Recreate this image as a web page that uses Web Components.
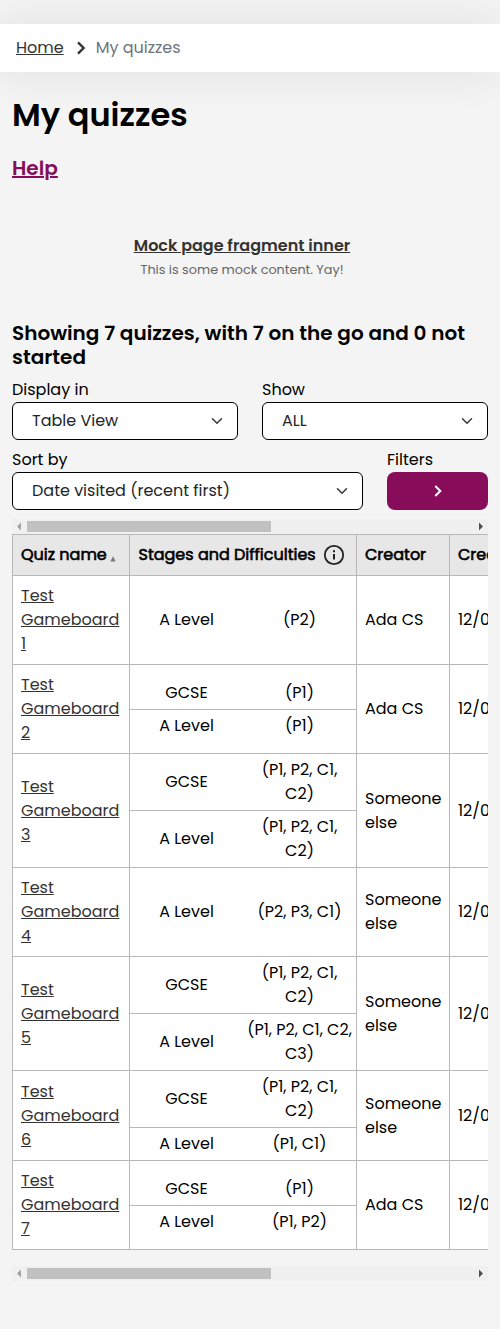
<!DOCTYPE html>
<html lang="en">
<head>
<meta charset="utf-8">
<title>My quizzes</title>
<style>
body{margin:0;background:#f4f4f4;color:#000;font:16px/24px Poppins,Inter,sans-serif}
</style>
</head>
<body>
<quiz-page></quiz-page>
<script>
const t = s => `<text-line>${s}</text-line>`;

// One unbroken line of text; "u" underlines it.
customElements.define('text-line', class extends HTMLElement {
  connectedCallback() {
    this.attachShadow({mode: 'open'}).innerHTML = `<style>
      :host{display:block;white-space:nowrap;width:max-content}
      :host([u]){text-decoration:underline}
    </style><slot></slot>`;
  }
});

customElements.define('crumb-bar', class extends HTMLElement {
  connectedCallback() {
    this.attachShadow({mode: 'open'}).innerHTML = `<style>
      :host{display:flex;align-items:center;height:48px;padding-left:16px;background:#fff;box-shadow:0 0 48px rgba(0,0,0,.09)}
      .home{color:#333}.now{color:#6c757d}
      svg{display:block;margin:0 10px 0 12px}
    </style><text-line class="home" u>Home</text-line>
    <svg width="10" height="14" viewBox="0 0 10 14" fill="none" stroke="#333" stroke-width="2.4"><path d="M2 1.4 7.6 7 2 12.6"/></svg>
    <text-line class="now">My quizzes</text-line>`;
  }
});

customElements.define('select-box', class extends HTMLElement {
  connectedCallback() {
    this.attachShadow({mode: 'open'}).innerHTML = `<style>
      :host{display:block}
      .box{box-sizing:border-box;display:flex;align-items:center;justify-content:space-between;height:38px;border:1px solid #000;border-radius:6px;background:#fff;padding:0 14px 0 19px;color:#212529}
    </style><slot name="label"></slot><div class="box"><slot></slot>
    <svg width="12" height="12" viewBox="0 0 16 16" fill="none" stroke="#343a40" stroke-width="2" stroke-linecap="round" stroke-linejoin="round"><path d="m2 5 6 6 6-6"/></svg></div>`;
  }
});

customElements.define('filter-button', class extends HTMLElement {
  connectedCallback() {
    this.attachShadow({mode: 'open'}).innerHTML = `<style>
      :host{display:block}
      button{display:flex;align-items:center;justify-content:center;width:100%;height:38px;margin:0;padding:0;border:0;border-radius:8px;background:#870d5a}
    </style><slot></slot><button aria-label="Filters"><svg width="8" height="12" viewBox="0 0 8 12" fill="none" stroke="#fff" stroke-width="2"><path d="M1.3 1 6.3 6l-5 5"/></svg></button>`;
  }
});

customElements.define('scroll-strip', class extends HTMLElement {
  connectedCallback() {
    this.attachShadow({mode: 'open'}).innerHTML = `<style>
      :host{display:grid;grid-template-columns:15px 244px 1fr 15px;align-items:center;height:15px;background:#f0f0f0}
      i{height:11px;background:#c1c1c1}
      svg{display:block}
    </style><svg width="15" height="15"><path d="M9 3.5v8l-4-4z" fill="#a3a3a3"/></svg><i></i><b></b>
    <svg width="15" height="15"><path d="M6 3.5v8l4-4z" fill="#505050"/></svg>`;
  }
});

customElements.define('stage-list', class extends HTMLElement {
  connectedCallback() {
    this.attachShadow({mode: 'open'}).innerHTML = `<style>
      :host{display:block;width:100%}
      .row{display:grid;grid-template-columns:1fr 1fr;align-items:center;padding:4px 0}
      .row+.row{border-top:1px solid #b8b8b8}
      .row>*{display:flex;flex-direction:column;align-items:center}
    </style>` + this.stages.map(([s, ...l]) => `<div class="row"><div>${t(s)}</div><div>${l.map(t).join('')}</div></div>`).join('');
  }
});

customElements.define('quiz-row', class extends HTMLElement {
  connectedCallback() {
    this.attachShadow({mode: 'open'}).innerHTML = `<style>
      :host{display:grid;grid-template-columns:117px 227px 93px 160px;background:#fff;border-bottom:1px solid #b8b8b8}
      .c{box-sizing:border-box;border-right:1px solid #b8b8b8;display:flex;flex-direction:column;justify-content:center;padding:0 8px}
      .name{padding:8px;color:#333}.stages{padding:0}
    </style><div class="c name"><text-line u>Test</text-line><text-line u>Gameboard</text-line><text-line u>${this.n}</text-line></div>
    <div class="c stages"></div>
    <div class="c">${this.ada ? t('Ada CS') : t('Someone') + t('else')}</div>
    <div class="c">${t('12/0')}</div>`;
    const s = document.createElement('stage-list');
    s.stages = this.stages;
    this.shadowRoot.querySelector('.stages').append(s);
  }
});

customElements.define('quiz-table', class extends HTMLElement {
  connectedCallback() {
    this.attachShadow({mode: 'open'}).innerHTML = `<style>
      :host{display:block;overflow:hidden;border:solid #b8b8b8;border-width:1px 0 0 1px}
      .head{display:grid;grid-template-columns:117px 227px 93px 160px;height:40px;background:#e7e7e7;border-bottom:1px solid #b8b8b8;width:max-content}
      .head text-line{-webkit-text-stroke:.6px #000}
      .head>div{box-sizing:border-box;border-right:1px solid #b8b8b8;display:flex;align-items:center;padding:0 8px}
      quiz-row{width:597px}
    </style><div class="head"><div>${t('Quiz name')}<svg width="6" height="6" style="margin:8px 0 0 3px"><path d="M3 .3 5.6 5.5H.4z" fill="#777"/></svg></div>
    <div style="padding-left:8.5px">${t('Stages and Difficulties')}<svg width="22" height="22" viewBox="0 0 22 22" style="margin-left:7.3px"><circle cx="11" cy="11" r="9.2" fill="none" stroke="#222" stroke-width="1.8"/><path d="M11 10v5.5M11 6.3v2" stroke="#222" stroke-width="2"/></svg></div>
    <div>${t('Creator')}</div><div>${t('Created')}</div></div>`;
    const long = ['(P1, P2, C1,', 'C2)'];
    [
      [1, [['A Level', '(P2)']]],
      [1, [['GCSE', '(P1)'], ['A Level', '(P1)']]],
      [0, [['GCSE', ...long], ['A Level', ...long]]],
      [0, [['A Level', '(P2, P3, C1)']]],
      [0, [['GCSE', ...long], ['A Level', '(P1, P2, C1, C2,', 'C3)']]],
      [0, [['GCSE', ...long], ['A Level', '(P1, C1)']]],
      [1, [['GCSE', '(P1)'], ['A Level', '(P1, P2)']]]
    ].forEach(([ada, stages], i) => {
      const r = document.createElement('quiz-row');
      Object.assign(r, {n: i + 1, ada, stages});
      this.shadowRoot.append(r);
    });
  }
});

customElements.define('quiz-page', class extends HTMLElement {
  connectedCallback() {
    this.attachShadow({mode: 'open'}).innerHTML = `<style>
      :host{display:block;padding-top:24px;height:1305px;overflow:hidden}
      main{padding:0 12px}
      h1{margin:0;padding-top:23px;font:600 32px/40px Poppins,Inter,sans-serif}
      .help{margin-top:21px;font-weight:600;font-size:20px;color:#870d5a}
      .mock{display:flex;flex-direction:column;align-items:center;margin:54px 16px 0 0}
      .mock .a{font-weight:600;color:#333}.mock .b{font-size:12.8px;color:#666}
      h2{margin:39px 0 9px;font:600 20px/24px Poppins,Inter,sans-serif}
      .two{display:grid;grid-template-columns:1fr 1fr;gap:24px}
      .sort{display:grid;grid-template-columns:351px 1fr;gap:24px;margin:8px 0 9px}
      .low{margin-top:16px}
    </style>
    <crumb-bar></crumb-bar>
    <main>
      <h1>${t('My quizzes')}</h1>
      <div class="help"><text-line u>Help</text-line></div>
      <div class="mock"><text-line class="a" u>Mock page fragment inner</text-line><text-line class="b">This is some mock content. Yay!</text-line></div>
      <h2>Showing 7 quizzes, with 7 on the go and 0 not started</h2>
      <div class="two">
        <select-box><text-line slot="label">Display in</text-line>${t('Table View')}</select-box>
        <select-box><text-line slot="label">Show</text-line>${t('ALL')}</select-box>
      </div>
      <div class="sort">
        <select-box><text-line slot="label">Sort by</text-line>${t('Date visited (recent first)')}</select-box>
        <filter-button>${t('Filters')}</filter-button>
      </div>
      <scroll-strip></scroll-strip>
      <quiz-table></quiz-table>
      <scroll-strip class="low"></scroll-strip>
    </main>`;
  }
});
</script>
</body>
</html>
